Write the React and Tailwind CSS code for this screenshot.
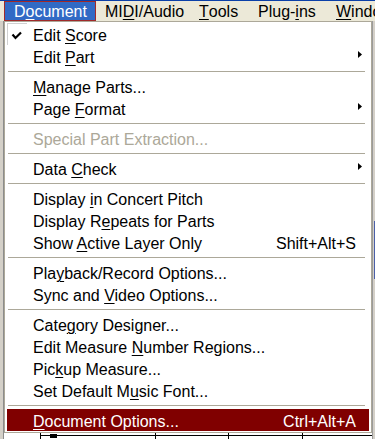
import React from 'react';

const FONT = "font-['Liberation_Sans',Arial,sans-serif]";

const Label = ({ text, u }) => {
  if (u == null) return text;
  return (
    <>
      {text.slice(0, u)}
      <span className="underline decoration-1 underline-offset-[2px]">{text[u]}</span>
      {text.slice(u + 1)}
    </>
  );
};

const menuBar = [
  { text: 'Document', u: 1, w: 'w-[92px]', active: true },
  { text: 'MIDI/Audio', u: 2, w: 'w-[94px]' },
  { text: 'Tools', u: 0, w: 'w-[59px]' },
  { text: 'Plug-ins', u: 5, w: 'w-[78px]' },
  { text: 'Window', u: 0, w: 'w-[80px]' },
];

const items = [
  { text: 'Edit Score', u: 5, checked: true },
  { text: 'Edit Part', u: 5, arrow: true },
  'sep',
  { text: 'Manage Parts...', u: 0 },
  { text: 'Page Format', u: 5, arrow: true },
  'sep',
  { text: 'Special Part Extraction...', disabled: true },
  'sep',
  { text: 'Data Check', u: 5, arrow: true },
  'sep',
  { text: 'Display in Concert Pitch', u: 8 },
  { text: 'Display Repeats for Parts', u: 9 },
  { text: 'Show Active Layer Only', u: 5, shortcut: 'Shift+Alt+S' },
  'sep',
  { text: 'Playback/Record Options...', u: 3 },
  { text: 'Sync and Video Options...', u: 9 },
  'sep',
  { text: 'Category Designer...', u: 4 },
  { text: 'Edit Measure Number Regions...', u: 13 },
  { text: 'Pickup Measure...', u: 3 },
  { text: 'Set Default Music Font...', u: 13 },
  'sep',
  { text: 'Document Options...', u: 0, shortcut: 'Ctrl+Alt+A', active: true },
];

const Separator = () => (
  <div className="h-[8px] flex items-center">
    <div className="ml-[1px] mr-[4px] h-px flex-1 bg-[#aca899]" />
  </div>
);

const MenuItem = ({ item }) => {
  const color = item.active
    ? 'bg-[#800000] text-white'
    : item.disabled
    ? 'text-[#aca899]'
    : 'text-black';
  return (
    <div className={`h-[22px] flex items-stretch ${color}`}>
      {/* check column */}
      <div
        className={`w-[20px] shrink-0 ${
          item.checked ? 'border-t border-l border-[#d0d0d0]' : ''
        }`}
      >
        {item.checked && (
          <svg width="19" height="21" viewBox="0 0 19 21">
            <polyline
              points="4.5,10.5 7.5,14 13,8.5"
              fill="none"
              stroke="#000"
              strokeWidth="2.2"
            />
          </svg>
        )}
      </div>
      <div className="flex-1 flex items-center pt-[4px] pl-[6px] whitespace-nowrap">
        <span className="flex-1">
          <Label text={item.text} u={item.u} />
        </span>
        {item.shortcut && <span className="mr-[13px]">{item.shortcut}</span>}
      </div>
      {item.arrow && (
        <div className="flex items-center mr-[7px] mb-[3px]">
          <svg width="4" height="7" viewBox="0 0 4 7">
            <polygon points="0,0 4,3.5 0,7" fill="#000" />
          </svg>
        </div>
      )}
    </div>
  );
};

export default function App() {
  return (
    <div className={`w-[375px] h-[439px] overflow-hidden flex flex-col text-[16px] ${FONT}`}>
      {/* menu bar */}
      <div className="h-[21px] border-t border-[#0a3fa8] bg-[#ece9d8] flex pl-[4px] text-black">
        {menuBar.map((m) => (
          <div
            key={m.text}
            className={`${m.w} shrink-0 h-[20px] flex items-center pl-[9px] pt-[1px] whitespace-nowrap ${
              m.active
                ? 'bg-[#316ac5] text-white border border-[#a02a2a] pl-[8px]'
                : ''
            }`}
          >
            <Label text={m.text} u={m.u} />
          </div>
        ))}
      </div>

      {/* application body */}
      <div className="relative flex-1 flex">
        <div className="w-[4px] bg-[#d4d0c8] border-r border-[#8c8c8c]" />
        <div className="flex-1 bg-white flex flex-col justify-end">
          <svg width="368" height="7" viewBox="0 0 368 7">
            <line x1="36" y1="3.5" x2="368" y2="3.5" stroke="#000" strokeWidth="1" />
            <line x1="36.5" y1="0" x2="36.5" y2="7" stroke="#000" />
            <line x1="151.5" y1="0" x2="151.5" y2="7" stroke="#000" />
            <line x1="224.5" y1="0" x2="224.5" y2="7" stroke="#000" />
            <line x1="298.5" y1="0" x2="298.5" y2="7" stroke="#000" />
            <rect x="46" y="2" width="7" height="4" fill="#000" />
          </svg>
        </div>
        <div className="w-[3px] bg-[#d4d0c8] border-l border-[#9a9a9a] flex justify-end">
          <div className="w-px bg-[#4a5fa8] mt-[200px] mb-[160px]" />
        </div>

        {/* dropdown menu */}
        <div className="absolute left-[4px] top-0 w-[368px] bg-white border border-[#aca899] px-[2px] py-[1px]">
          {items.map((it, i) =>
            it === 'sep' ? <Separator key={i} /> : <MenuItem key={i} item={it} />
          )}
        </div>
      </div>
    </div>
  );
}
